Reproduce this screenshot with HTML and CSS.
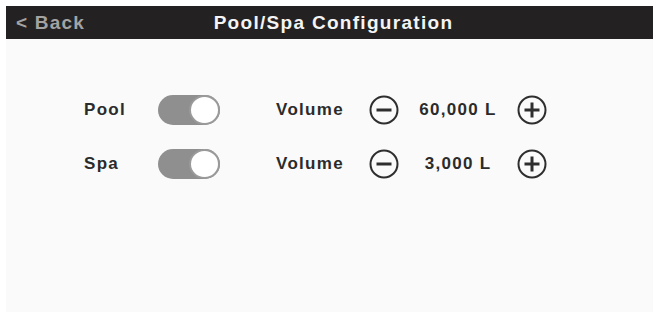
FILE: index.html
```html
<!DOCTYPE html>
<html>
<head>
<meta charset="utf-8">
<link rel="stylesheet" href="styles.css">
</head>
<body>
<div class="screen">
  <header class="topbar">
    <span class="back">&lt; Back</span>
    <span class="title">Pool/Spa Configuration</span>
  </header>
  <main class="content">
    <div class="row">
      <span class="label">Pool</span>
      <span class="toggle"><span class="knob"></span></span>
      <span class="vol">Volume</span>
      <svg class="btn" viewBox="0 0 30 30"><circle cx="15" cy="15" r="13.5" fill="none" stroke="#2e2e2e" stroke-width="2"/><line x1="7.5" y1="15" x2="22.5" y2="15" stroke="#2e2e2e" stroke-width="3"/></svg>
      <span class="value">60,000 L</span>
      <svg class="btn" viewBox="0 0 30 30"><circle cx="15" cy="15" r="13.5" fill="none" stroke="#2e2e2e" stroke-width="2"/><line x1="7.5" y1="15" x2="22.5" y2="15" stroke="#2e2e2e" stroke-width="3"/><line x1="15" y1="7.5" x2="15" y2="22.5" stroke="#2e2e2e" stroke-width="3"/></svg>
    </div>
    <div class="row">
      <span class="label">Spa</span>
      <span class="toggle"><span class="knob"></span></span>
      <span class="vol">Volume</span>
      <svg class="btn" viewBox="0 0 30 30"><circle cx="15" cy="15" r="13.5" fill="none" stroke="#2e2e2e" stroke-width="2"/><line x1="7.5" y1="15" x2="22.5" y2="15" stroke="#2e2e2e" stroke-width="3"/></svg>
      <span class="value">3,000 L</span>
      <svg class="btn" viewBox="0 0 30 30"><circle cx="15" cy="15" r="13.5" fill="none" stroke="#2e2e2e" stroke-width="2"/><line x1="7.5" y1="15" x2="22.5" y2="15" stroke="#2e2e2e" stroke-width="3"/><line x1="15" y1="7.5" x2="15" y2="22.5" stroke="#2e2e2e" stroke-width="3"/></svg>
    </div>
  </main>
</div>
</body>
</html>
```
FILE: styles.css
```css
html, body {
  margin: 0;
  padding: 0;
  background: #ffffff;
  font-family: "Liberation Sans", Arial, sans-serif;
}
.screen {
  margin: 6px 6px 0 6px;
  width: 647px;
  height: 306px;
  display: flex;
  flex-direction: column;
}
.topbar {
  height: 33px;
  background: #242122;
  display: grid;
  grid-template-columns: 1fr auto 1fr;
  align-items: center;
}
.back {
  grid-column: 1;
  justify-self: start;
  padding-left: 10px;
  color: #a3a3a3;
  font-size: 19px;
  font-weight: bold;
  letter-spacing: 1.2px;
}
.title {
  grid-column: 2;
  color: #f4f4f4;
  font-size: 19px;
  font-weight: bold;
  letter-spacing: 1.3px;
  padding-left: 8px;
}
.content {
  flex: 1;
  background: #fafafa;
  padding: 56px 0 0 78px;
  display: flex;
  flex-direction: column;
  gap: 24px;
}
.row {
  display: flex;
  align-items: center;
  height: 30px;
}
.label {
  width: 74px;
  font-size: 17px;
  font-weight: bold;
  letter-spacing: 1.3px;
  color: #2b2b2b;
}
.toggle {
  width: 62px;
  height: 30px;
  border-radius: 15px;
  background: #8f8f8f;
  display: flex;
  justify-content: flex-end;
  box-sizing: border-box;
  margin-right: 56px;
}
.knob {
  width: 31px;
  height: 30px;
  box-sizing: border-box;
  border-radius: 50%;
  background: #ffffff;
  border: 2px solid #9a9a9a;
}
.vol {
  width: 93px;
  font-size: 17px;
  font-weight: bold;
  letter-spacing: 1.3px;
  color: #2b2b2b;
}
.btn {
  width: 30px;
  height: 30px;
  display: block;
}
.value {
  width: 118px;
  text-align: center;
  font-size: 17px;
  font-weight: bold;
  letter-spacing: 1.3px;
  color: #2b2b2b;
}
```
